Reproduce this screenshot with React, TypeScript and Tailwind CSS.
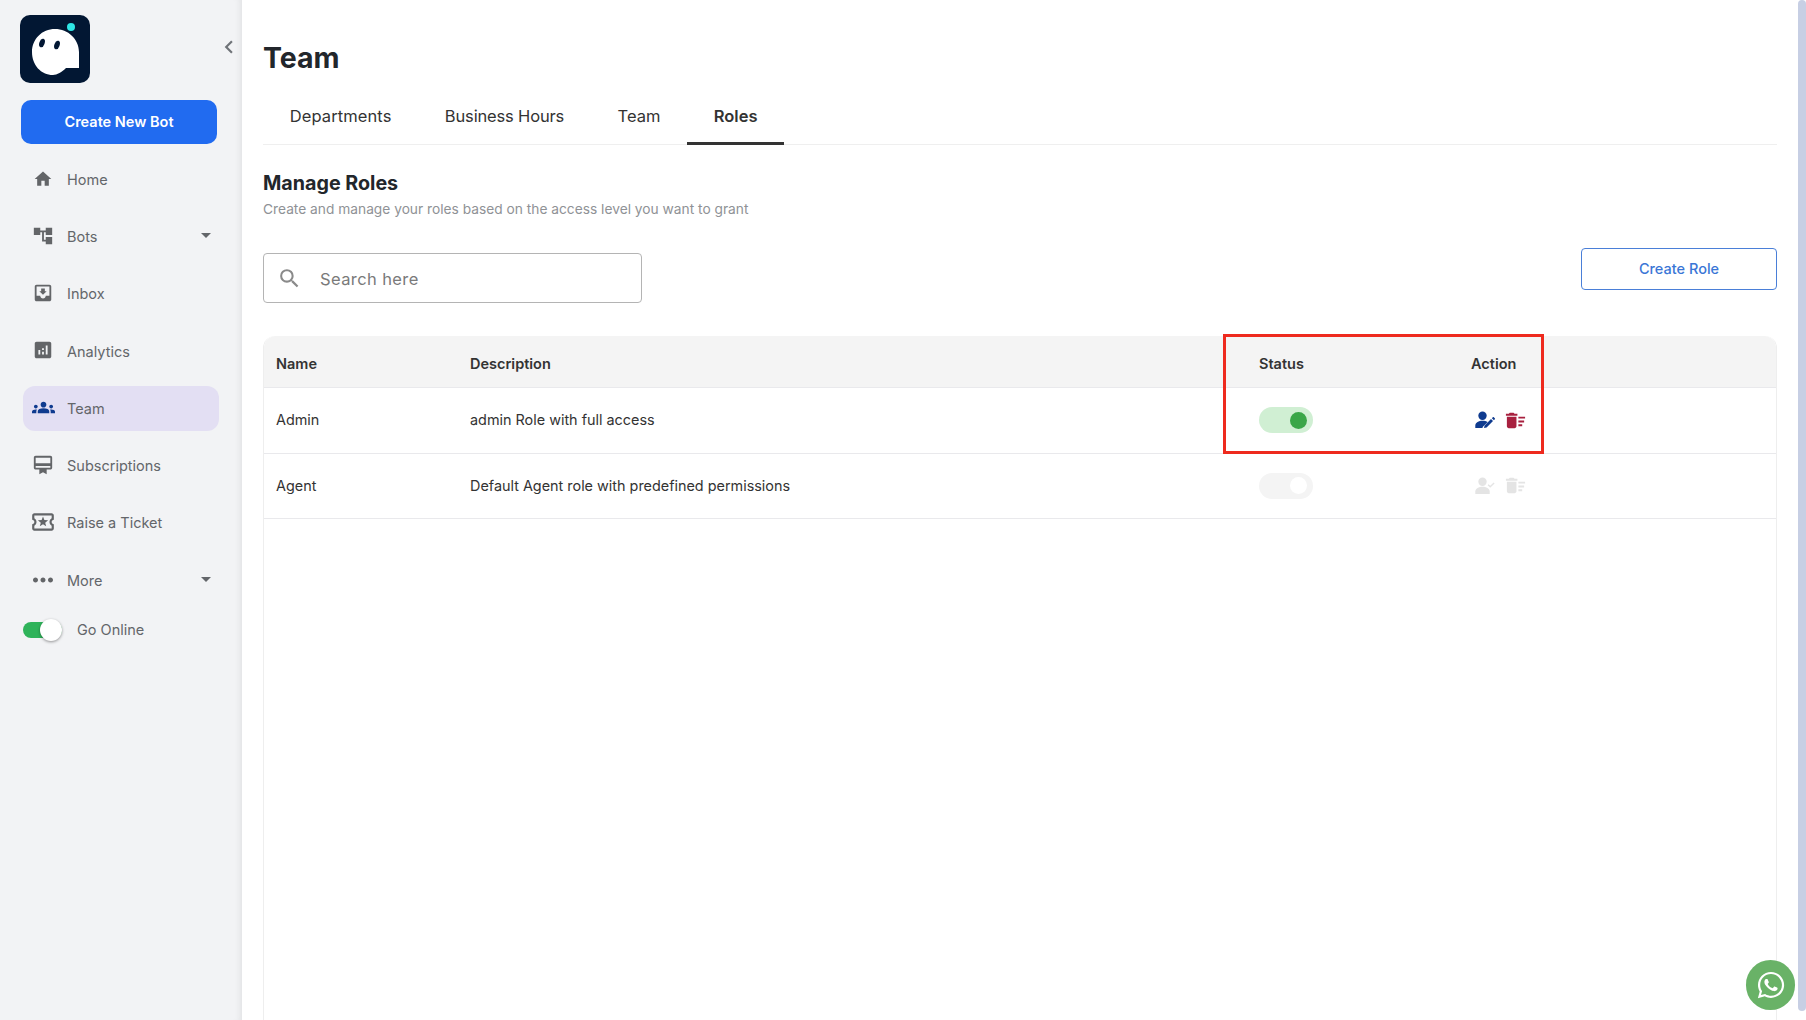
import React from 'react';
import {
  MdHome,
  MdAccountTree,
  MdMoveToInbox,
  MdAnalytics,
  MdGroups,
  MdOutlineCardMembership,
  MdOutlineLocalActivity,
  MdMoreHoriz,
  MdArrowDropDown,
  MdChevronLeft,
  MdSearch,
  MdDeleteSweep,
} from 'react-icons/md';
import { FaWhatsapp } from 'react-icons/fa';

const PersonEdit = ({ className }: { className?: string }) => (
  <svg viewBox="0 0 20 18" className={className} fill="currentColor">
    <circle cx="7.5" cy="4.7" r="4.2" />
    <path d="M0.3 17v-2.4c0-3 3.6-4.9 7.2-4.9 2 0 3.8 0.5 5.2 1.3L7.9 15.8 7.4 17z" />
    <path d="M9 17l0.6-2.6 6.4-6.3 2 2-6.4 6.3z M16.9 7.2l0.9-0.9c0.3-0.3 0.7-0.3 1 0l1 1c0.3 0.3 0.3 0.7 0 1l-0.9 0.9z" />
  </svg>
);

const PersonCheck = ({ className }: { className?: string }) => (
  <svg viewBox="0 0 20 18" className={className} fill="currentColor">
    <circle cx="7.5" cy="4.7" r="4.2" />
    <path d="M0.3 17v-2.4c0-3 3.6-4.9 7.2-4.9s7.2 1.9 7.2 4.9V17z" />
    <path d="M12.6 8.2l1-1 1.6 1.6 3.4-3.4 1 1-4.4 4.4z" />
  </svg>
);

const navItems = [
  { label: 'Home', icon: MdHome, size: 'h-[20px] w-[20px]' },
  { label: 'Bots', icon: MdAccountTree, size: 'h-[22px] w-[22px]', caret: true },
  { label: 'Inbox', icon: MdMoveToInbox, size: 'h-[22px] w-[22px]' },
  { label: 'Analytics', icon: MdAnalytics, size: 'h-[22px] w-[22px]' },
  { label: 'Team', icon: MdGroups, size: 'h-[23px] w-[23px]', active: true },
  { label: 'Subscriptions', icon: MdOutlineCardMembership, size: 'h-[22px] w-[22px]' },
  { label: 'Raise a Ticket', icon: MdOutlineLocalActivity, size: 'h-[26px] w-[26px]' },
  { label: 'More', icon: MdMoreHoriz, size: 'h-[30px] w-[30px]', caret: true },
];

const tabs = [
  { label: 'Departments', cls: 'tracking-[0.1px] border-transparent' },
  { label: 'Business Hours', cls: 'tracking-[-0.16px] border-transparent' },
  { label: 'Team', cls: 'border-transparent' },
  { label: 'Roles', cls: 'border-[#333] font-semibold' },
];

const Sidebar = () => (
  <aside className="relative flex h-full w-[242px] shrink-0 flex-col bg-[#f2f3f5] pt-[15px] shadow-[inset_-7px_0_6px_-5px_rgba(0,0,0,0.07)]">
    <div className="flex items-start justify-between pl-5">
      {/* logo */}
      <svg viewBox="0 0 70 68" className="h-[68px] w-[70px]">
        <rect width="70" height="68" rx="10" fill="#021733" />
        <path d="M35 14c13 0 24 10 24 23v16H46c-4 4-9 7-13 7-12 0-21-10-21-23s10-23 23-23z" fill="#fff" />
        <circle cx="51" cy="12" r="4" fill="#2ee6e6" />
        <ellipse cx="22" cy="28" rx="2.6" ry="4.4" transform="rotate(20 22 28)" fill="#021733" />
        <ellipse cx="37" cy="30" rx="2.6" ry="4.4" transform="rotate(20 37 30)" fill="#021733" />
      </svg>
      <MdChevronLeft className="mt-[19px] h-[26px] w-[26px] text-[#6f7378]" />
    </div>
    <button className="ml-[21px] mt-[17px] h-[44px] w-[196px] rounded-[10px] bg-[#216bf0] text-[14.5px] font-semibold text-white">
      Create New Bot
    </button>
    <nav className="mt-[13px] flex flex-col gap-[12.3px]">
      {navItems.map((item) => {
        const Icon = item.icon;
        return (
          <div
            key={item.label}
            className={`ml-[23px] flex h-[45px] w-[196px] items-center rounded-[12px] pl-[8px] pr-[1px] ${
              item.active ? 'bg-[#e3dff3]' : ''
            }`}
          >
            <div className="flex h-[24px] w-[24px] shrink-0 -translate-y-px items-center justify-center">
              <Icon className={`shrink-0 ${item.size} ${item.active ? 'text-[#0f3b8f]' : 'text-[#636568]'}`} />
            </div>
            <span className="ml-[12px] text-[14.5px] text-[#63666a]">{item.label}</span>
            {item.caret && <MdArrowDropDown className="ml-auto h-[24px] w-[24px] -translate-y-[2px] text-[#63666a]" />}
          </div>
        );
      })}
    </nav>
    <div className="ml-[23px] mt-[16px] flex items-center">
      <div className="relative h-[16px] w-[39px] rounded-full bg-[#2fb35a]">
        <div className="absolute left-[17px] top-[-3px] h-[22px] w-[22px] rounded-full bg-white shadow-[0_1px_3px_rgba(0,0,0,0.4)]" />
      </div>
      <span className="ml-[15px] text-[14.5px] text-[#63666a]">Go Online</span>
    </div>
  </aside>
);

const Toggle = ({ on }: { on?: boolean }) => (
  <div className={`flex h-[26px] w-[54px] items-center justify-end rounded-full pr-[6px] ${on ? 'bg-[#d0efd3]' : 'bg-[#f4f4f4]'}`}>
    <div className={`h-[17px] w-[17px] rounded-full ${on ? 'bg-[#3aa648]' : 'bg-white'}`} />
  </div>
);

const Row = ({ name, desc, on }: { name: string; desc: string; on?: boolean }) => (
  <div className="flex h-[65.5px] items-center border-b border-[#e9e9ec] text-[14.4px] text-[#333]">
    <div className="w-[206px] pl-[12px]">{name}</div>
    <div className="w-[789px]">{desc}</div>
    <div className="w-[212px]">
      <Toggle on={on} />
    </div>
    <div className="ml-[4px] flex items-center gap-[9px]">
      {on ? (
        <PersonEdit className="h-[18px] w-[20px] text-[#0f3b8f]" />
      ) : (
        <PersonCheck className="h-[18px] w-[20px] text-[#e4e4e4]" />
      )}
      <MdDeleteSweep className={`h-[23px] w-[23px] ${on ? 'text-[#a8203f]' : 'text-[#e4e4e4]'}`} />
    </div>
  </div>
);

export default function App() {
  return (
    <div className="relative flex h-[1020px] w-[1806px] overflow-hidden bg-white font-['Inter',sans-serif]">
      <Sidebar />
      <main className="flex min-w-0 flex-1 flex-col pl-[21px] pr-[29px] pt-[39px]">
        <h1 className="text-[28.5px] leading-[38px] font-bold text-[#22262b]">Team</h1>
        <div className="mt-[21px] flex h-[47px] border-b border-[#efefef]">
          {tabs.map((t) => (
            <div
              key={t.label}
              className={`flex h-[47px] items-center border-b-[3px] px-[26.7px] pb-[7px] text-[16.5px] text-[#333] ${t.cls}`}
            >
              {t.label}
            </div>
          ))}
        </div>
        <h2 className="mt-[24px] text-[19.7px] leading-[28px] font-bold text-[#22262b]">Manage Roles</h2>
        <p className="mt-[2px] text-[13.75px] leading-[20px] text-[#8f9296]">
          Create and manage your roles based on the access level you want to grant
        </p>
        <div className="mt-[24px] flex items-start justify-between">
          <div className="mt-[10px] flex h-[50px] w-[379px] items-center rounded-[4px] border border-[#b4b4b4] pl-[13px]">
            <MdSearch className="h-[25px] w-[25px] text-[#8a8a8a]" />
            <span className="ml-[18px] pt-[2px] text-[16.5px] tracking-[0.4px] text-[#7a7a7a]">Search here</span>
          </div>
          <button className="mt-[4.5px] h-[42px] w-[196px] rounded-[4px] border border-[#4a7fd8] text-[14.5px] font-medium text-[#3a76d6]">
            Create Role
          </button>
        </div>
        <div className="relative mt-[33px] flex-1 rounded-t-[12px] border-x border-[#eeeeee]">
          <div className="flex h-[52px] items-center rounded-t-[12px] border-b border-[#e9e9ec] bg-[#f4f4f4] pt-[5px] text-[14.5px] font-semibold text-[#333]">
            <div className="w-[206px] pl-[12px]">Name</div>
            <div className="w-[789px]">Description</div>
            <div className="w-[212px]">Status</div>
            <div>Action</div>
          </div>
          <Row name="Admin" desc="admin Role with full access" on />
          <Row name="Agent" desc="Default Agent role with predefined permissions" />
          <div className="absolute left-[959px] top-[-2px] h-[120px] w-[321px] border-[3px] border-[#ee2a1e]" />
        </div>
      </main>
      {/* scrollbar */}
      <div className="absolute right-0 top-0 h-[1011px] w-[8px] rounded-full bg-[#c7cfe4]" />
      <div className="absolute left-[1746px] top-[960px] flex h-[50px] w-[49px] items-center justify-center rounded-full bg-[#69b267]">
        <FaWhatsapp className="h-[30px] w-[30px] text-white" />
      </div>
    </div>
  );
}
